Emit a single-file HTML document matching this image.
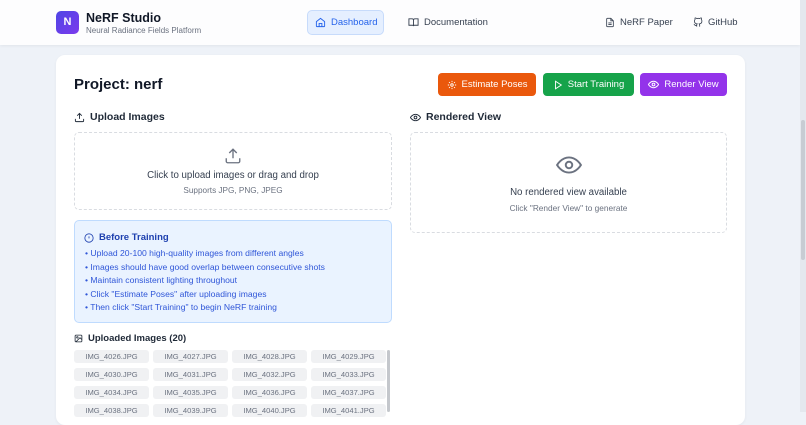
<!DOCTYPE html>
<html><head><meta charset="utf-8"><style>
*{box-sizing:border-box;margin:0;padding:0}
body{width:806px;height:412px;overflow:hidden;background:#eef2f8;font-family:"Liberation Sans",sans-serif;position:relative;color:#111827}
.hdr{position:absolute;left:0;top:0;width:800px;height:45px;background:#fdfdfe;box-shadow:0 1px 3px rgba(0,0,0,.06)}
.logo{position:absolute;left:56px;top:11px;width:23px;height:23px;border-radius:5px;background:linear-gradient(135deg,#4f46e5,#7c3aed);color:#fff;font-weight:bold;font-size:11px;text-align:center;line-height:23px}
.t1{position:absolute;left:86px;top:11px;font-size:12.5px;font-weight:bold}
.t2{position:absolute;left:86px;top:26px;font-size:8px;color:#6b7280}
.nav{position:absolute;top:10px;height:25px;font-size:9.5px;color:#374151;display:flex;align-items:center;gap:5px}
.dash{left:307px;width:77px;background:#e5efff;border:1px solid #c7dbfb;border-radius:5px;color:#2563eb;padding-left:7px}
svg{display:block}
.card{position:absolute;left:56px;top:55px;width:689px;height:370px;background:#fff;border-radius:9px;box-shadow:0 1px 3px rgba(0,0,0,.05)}
.h1{position:absolute;left:74px;top:76px;font-size:15px;font-weight:bold}
.btn{position:absolute;top:73px;height:23px;border-radius:4px;color:#fff;font-size:9.5px;display:flex;align-items:center;justify-content:center;gap:5px}
.h2{position:absolute;top:111px;font-size:10.5px;font-weight:bold;display:flex;align-items:center;gap:5px;color:#1f2937}
.drop{position:absolute;border:1px dashed #d9dce1;border-radius:5px;text-align:center}
.info{position:absolute;left:74px;top:220px;width:318px;height:103px;background:#eaf3ff;border:1px solid #bfdbfe;border-radius:5px;color:#2f56d8}
.info .ti{position:absolute;left:9px;top:11px;font-size:9.5px;font-weight:bold;display:flex;gap:5px;align-items:center;color:#1e40af}
.info ul{position:absolute;left:10px;top:26px;list-style:none;font-size:8.6px;line-height:13.5px}
.grid{position:absolute;left:74px;top:350px;width:307px;display:grid;grid-template-columns:repeat(4,75px);column-gap:4px;row-gap:5px}
.grid div{height:13px;background:#f0f1f3;border-radius:3px;font-size:7.6px;color:#6b7280;text-align:center;line-height:13px}
</style></head><body>
<div class="hdr">
<div class="logo">N</div>
<div class="t1">NeRF Studio</div>
<div class="t2">Neural Radiance Fields Platform</div>
<div class="nav dash"><svg width="11" height="11" viewBox="0 0 24 24" fill="none" stroke="#2563eb" stroke-width="2"><path d="M3 10l9-7 9 7v10a1 1 0 0 1-1 1H4a1 1 0 0 1-1-1z"/><path d="M9 21v-7h6v7"/></svg>Dashboard</div>
<div class="nav" style="left:408px"><svg width="11" height="11" viewBox="0 0 24 24" fill="none" stroke="#374151" stroke-width="2"><path d="M2 4h7a3 3 0 0 1 3 3v13a2 2 0 0 0-2-2H2zM22 4h-7a3 3 0 0 0-3 3v13a2 2 0 0 1 2-2h8z"/></svg>Documentation</div>
<div class="nav" style="left:605px"><svg width="10" height="11" viewBox="0 0 24 24" fill="none" stroke="#374151" stroke-width="2"><path d="M14 2H6a2 2 0 0 0-2 2v16a2 2 0 0 0 2 2h12a2 2 0 0 0 2-2V8z"/><path d="M14 2v6h6M8 13h8M8 17h8"/></svg>NeRF Paper</div>
<div class="nav" style="left:693px"><svg width="10" height="11" viewBox="0 0 24 24" fill="none" stroke="#374151" stroke-width="2"><path d="M9 19c-5 1.5-5-2.5-7-3m14 6v-3.9a3.4 3.4 0 0 0-1-2.6c3.1-.3 6.4-1.5 6.4-7A5.4 5.4 0 0 0 20 4.8 5 5 0 0 0 19.9 1S18.7.7 16 2.5a13.4 13.4 0 0 0-7 0C6.3.7 5.1 1 5.1 1A5 5 0 0 0 5 4.8a5.4 5.4 0 0 0-1.5 3.7c0 5.4 3.3 6.6 6.4 7a3.4 3.4 0 0 0-1 2.6V22"/></svg>GitHub</div>
</div>
<div style="position:absolute;left:800px;top:0;width:6px;height:412px;background:#e4e8ee"></div>
<div style="position:absolute;left:801px;top:120px;width:4px;height:140px;background:#c7ccd3;border-radius:2px"></div>
<div class="card"></div>
<div class="h1">Project: nerf</div>
<div class="btn" style="left:438px;width:98px;background:#ea580c"><svg width="10" height="10" viewBox="0 0 24 24" fill="none" stroke="#fff" stroke-width="2.2"><circle cx="12" cy="12" r="3"/><path d="M12 2v3M12 19v3M2 12h3M19 12h3M4.9 4.9l2.1 2.1M17 17l2.1 2.1M4.9 19.1L7 17M17 7l2.1-2.1"/></svg>Estimate Poses</div>
<div class="btn" style="left:543px;width:91px;background:#16a34a"><svg width="10" height="10" viewBox="0 0 24 24" fill="none" stroke="#fff" stroke-width="2.2"><path d="M6 3l14 9-14 9z"/></svg>Start Training</div>
<div class="btn" style="left:640px;width:87px;background:#9333ea"><svg width="11" height="11" viewBox="0 0 24 24" fill="none" stroke="#fff" stroke-width="2.2"><path d="M1 12s4-7 11-7 11 7 11 7-4 7-11 7S1 12 1 12z"/><circle cx="12" cy="12" r="3"/></svg>Render View</div>
<div class="h2" style="left:74px"><svg width="11" height="11" viewBox="0 0 24 24" fill="none" stroke="#1f2937" stroke-width="2"><path d="M21 15v4a2 2 0 0 1-2 2H5a2 2 0 0 1-2-2v-4M17 8l-5-5-5 5M12 3v12"/></svg>Upload Images</div>
<div class="h2" style="left:410px"><svg width="11" height="11" viewBox="0 0 24 24" fill="none" stroke="#1f2937" stroke-width="2"><path d="M1 12s4-7 11-7 11 7 11 7-4 7-11 7S1 12 1 12z"/><circle cx="12" cy="12" r="3"/></svg>Rendered View</div>
<div class="drop" style="left:74px;top:132px;width:318px;height:78px">
<svg style="margin:14px auto 0" width="18" height="18" viewBox="0 0 24 24" fill="none" stroke="#6b7280" stroke-width="1.8"><path d="M21 15v4a2 2 0 0 1-2 2H5a2 2 0 0 1-2-2v-4M17 8l-5-5-5 5M12 3v12"/></svg>
<div style="font-size:9.7px;color:#374151;margin-top:5px">Click to upload images or drag and drop</div>
<div style="font-size:8.2px;color:#6b7280;margin-top:5px">Supports JPG, PNG, JPEG</div></div>
<div class="drop" style="left:410px;top:132px;width:317px;height:101px">
<svg style="margin:19px auto 0" width="26" height="26" viewBox="0 0 24 24" fill="none" stroke="#6b7280" stroke-width="1.8"><path d="M1 12s4-7 11-7 11 7 11 7-4 7-11 7S1 12 1 12z"/><circle cx="12" cy="12" r="3"/></svg>
<div style="font-size:9.7px;color:#374151;margin-top:9px">No rendered view available</div>
<div style="font-size:8.3px;color:#6b7280;margin-top:5px">Click "Render View" to generate</div></div>
<div class="info"><div class="ti"><svg width="10" height="10" viewBox="0 0 24 24" fill="none" stroke="#1e40af" stroke-width="2"><circle cx="12" cy="12" r="10"/><path d="M12 8v5M12 16h.01"/></svg>Before Training</div>
<ul><li>• Upload 20-100 high-quality images from different angles</li><li>• Images should have good overlap between consecutive shots</li><li>• Maintain consistent lighting throughout</li><li>• Click "Estimate Poses" after uploading images</li><li>• Then click "Start Training" to begin NeRF training</li></ul></div>
<div class="h2" style="left:74px;top:333px;font-size:9.5px"><svg width="9" height="9" viewBox="0 0 24 24" fill="none" stroke="#1f2937" stroke-width="2.2"><rect x="3" y="3" width="18" height="18" rx="2"/><circle cx="9" cy="9" r="2"/><path d="M21 15l-5-5L5 21"/></svg>Uploaded Images (20)</div>
<div class="grid">
<div>IMG_4026.JPG</div><div>IMG_4027.JPG</div><div>IMG_4028.JPG</div><div>IMG_4029.JPG</div>
<div>IMG_4030.JPG</div><div>IMG_4031.JPG</div><div>IMG_4032.JPG</div><div>IMG_4033.JPG</div>
<div>IMG_4034.JPG</div><div>IMG_4035.JPG</div><div>IMG_4036.JPG</div><div>IMG_4037.JPG</div>
<div>IMG_4038.JPG</div><div>IMG_4039.JPG</div><div>IMG_4040.JPG</div><div>IMG_4041.JPG</div>
</div>
<div style="position:absolute;left:387px;top:350px;width:3px;height:62px;background:#c4c7cc;border-radius:2px"></div>
</body></html>
